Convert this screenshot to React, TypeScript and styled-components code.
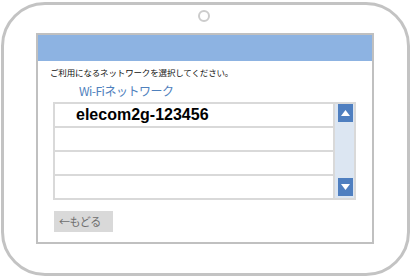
import styled, { createGlobalStyle } from 'styled-components';

const GlobalStyle = createGlobalStyle`
  html, body {
    margin: 0;
    padding: 0;
    background: #ffffff;
  }
  body {
    font-family: "Noto Sans CJK JP", "Noto Sans", sans-serif;
  }
`;

const Page = styled.div`
  width: 411px;
  height: 279px;
  padding: 2px 0 0 1px;
  box-sizing: border-box;
`;

// タブレット本体の枠
const Device = styled.div`
  width: 409px;
  height: 274px;
  box-sizing: border-box;
  border: 3px solid #c3c3c3;
  border-radius: 44px;
  display: flex;
  flex-direction: column;
  align-items: flex-start;
`;

const Camera = styled.div`
  width: 12px;
  height: 12px;
  box-sizing: border-box;
  margin: 5px 0 0 194px;
  border: 2.5px solid #cccccc;
  border-radius: 50%;
`;

const Screen = styled.div`
  width: 338px;
  height: 211px;
  margin: 11px 0 0 32px;
  box-sizing: border-box;
  border: 2px solid #c0c0c0;
  display: flex;
  flex-direction: column;
`;

const TitleBar = styled.div`
  height: 26px;
  background: #8db3e2;
`;

const Body = styled.div`
  padding: 5px 0 0 12px;
  display: flex;
  flex-direction: column;
  align-items: flex-start;
`;

const Guide = styled.p`
  margin: 0;
  font-size: 8.5px;
  line-height: 12px;
  letter-spacing: -0.15px;
  color: #111111;
`;

const SectionLabel = styled.p`
  margin: 5px 0 0 29px;
  font-size: 12px;
  line-height: 15px;
  letter-spacing: -0.5px;
  color: #4f81bd;
`;

const ListBox = styled.div`
  margin: 4px 0 0 3px;
  width: 303px;
  box-sizing: border-box;
  padding: 2px;
  gap: 2px;
  background: #d9d9d9;
  display: flex;
`;

const Rows = styled.div`
  flex: 1;
  display: flex;
  flex-direction: column;
  gap: 2px;
`;

const Row = styled.div`
  height: 22px;
  background: #ffffff;
  display: flex;
  align-items: center;
  padding-left: 21px;
  font-family: "Liberation Sans", Arial, sans-serif;
  font-weight: bold;
  font-size: 16px;
  color: #000000;
`;

const Track = styled.div`
  width: 19px;
  background: #dce6f2;
  display: flex;
  flex-direction: column;
  justify-content: space-between;
  align-items: center;
  padding: 0 0 2px 1px;
  box-sizing: border-box;
`;

const ArrowButton = styled.div`
  width: 15px;
  height: 18px;
  background: #4f7fc0;
  display: flex;
  align-items: center;
  justify-content: center;
`;

const BackButton = styled.div`
  margin: 11px 0 0 4px;
  width: 59px;
  height: 21px;
  background: #d9d9d9;
  color: #6e6e6e;
  font-size: 11px;
  line-height: 21px;
  padding-left: 5px;
  box-sizing: border-box;
  letter-spacing: -0.5px;
`;

function Triangle({ down }: { down?: boolean }) {
  return (
    <svg width="9" height="6" viewBox="0 0 9 6">
      <polygon points={down ? '0,0 9,0 4.5,6' : '0,6 9,6 4.5,0'} fill="#ffffff" />
    </svg>
  );
}

const networks = ['elecom2g-123456', '', '', ''];

export default function App() {
  return (
    <Page>
      <GlobalStyle />
      <Device>
        <Camera />
        <Screen>
          <TitleBar />
          <Body>
            <Guide>ご利用になるネットワークを選択してください。</Guide>
            <SectionLabel>Wi-Fiネットワーク</SectionLabel>
            <ListBox>
              <Rows>
                {networks.map((name, i) => (
                  <Row key={i}>{name}</Row>
                ))}
              </Rows>
              <Track>
                <ArrowButton>
                  <Triangle />
                </ArrowButton>
                <ArrowButton>
                  <Triangle down />
                </ArrowButton>
              </Track>
            </ListBox>
            <BackButton>←もどる</BackButton>
          </Body>
        </Screen>
      </Device>
    </Page>
  );
}
